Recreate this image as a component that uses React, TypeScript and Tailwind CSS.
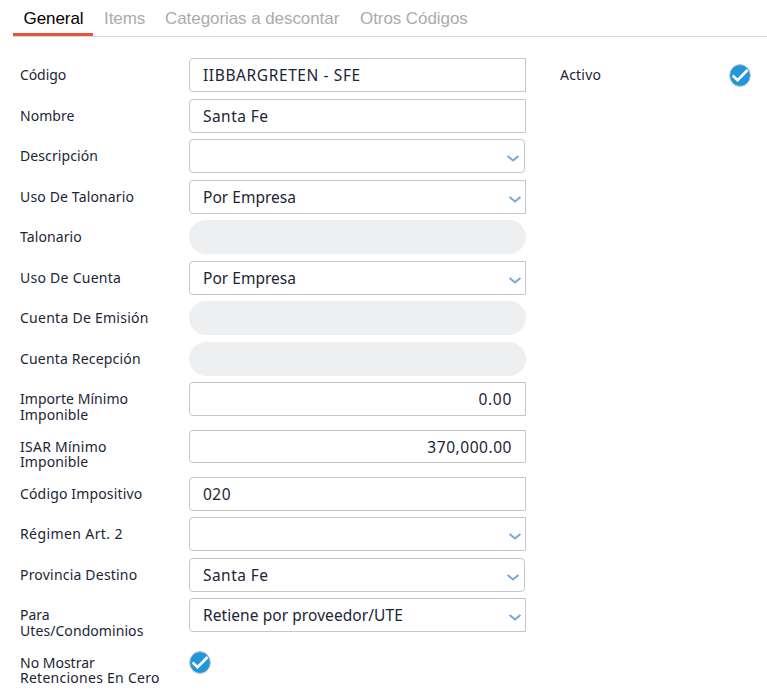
type Line = { text: string; tracking: string };

type Row = {
  label: Line[];
  value?: string;
  kind: 'text' | 'select' | 'selectRound' | 'disabled' | 'number' | 'check';
  height: string;
  valueTracking?: string;
  leading?: string;
  box?: string;
};

const rows: Row[] = [
  { label: [{ text: 'Código', tracking: 'tracking-[-0.1px]' }], value: 'IIBBARGRETEN - SFE', kind: 'text', height: 'h-[41px]', valueTracking: 'tracking-[0.6px]' },
  { label: [{ text: 'Nombre', tracking: 'tracking-[0.03px]' }], value: 'Santa Fe', kind: 'text', height: 'h-10', valueTracking: 'tracking-[0.45px]' },
  { label: [{ text: 'Descripción', tracking: 'tracking-[0.1px]' }], kind: 'selectRound', height: 'h-[41px]' },
  { label: [{ text: 'Uso De Talonario', tracking: 'tracking-[0.15px]' }], value: 'Por Empresa', kind: 'select', height: 'h-10', valueTracking: 'tracking-[0.02px]' },
  { label: [{ text: 'Talonario', tracking: 'tracking-[0.1px]' }], kind: 'disabled', height: 'h-[41px]' },
  { label: [{ text: 'Uso De Cuenta', tracking: 'tracking-[0.26px]' }], value: 'Por Empresa', kind: 'select', height: 'h-10', valueTracking: 'tracking-[0.02px]' },
  { label: [{ text: 'Cuenta De Emisión', tracking: 'tracking-[0.26px]' }], kind: 'disabled', height: 'h-[41px]' },
  { label: [{ text: 'Cuenta Recepción', tracking: 'tracking-[0.18px]' }], kind: 'disabled', height: 'h-10' },
  { label: [{ text: 'Importe Mínimo', tracking: 'tracking-[0.05px]' }, { text: 'Imponible', tracking: 'tracking-[0.1px]' }], value: '0.00', kind: 'number', height: 'h-12', valueTracking: 'tracking-[0.7px]' },
  { label: [{ text: 'ISAR Mínimo', tracking: 'tracking-[0.26px]' }, { text: 'Imponible', tracking: 'tracking-[0.1px]' }], value: '370,000.00', kind: 'number', height: 'h-[47px]', valueTracking: 'tracking-[0.54px]', leading: 'leading-[15px]', box: 'h-[33px]' },
  { label: [{ text: 'Código Impositivo', tracking: 'tracking-[0.15px]' }], value: '020', kind: 'text', height: 'h-10', valueTracking: 'tracking-[0.5px]' },
  { label: [{ text: 'Régimen Art. 2', tracking: 'tracking-[0.4px]' }], kind: 'select', height: 'h-[41px]' },
  { label: [{ text: 'Provincia Destino', tracking: 'tracking-[0.2px]' }], value: 'Santa Fe', kind: 'selectRound', height: 'h-10', valueTracking: 'tracking-[0.45px]' },
  { label: [{ text: 'Para', tracking: 'tracking-normal' }, { text: 'Utes/Condominios', tracking: 'tracking-[0.07px]' }], value: 'Retiene por proveedor/UTE', kind: 'select', height: 'h-12', valueTracking: 'tracking-[0.07px]' },
  { label: [{ text: 'No Mostrar', tracking: 'tracking-normal' }, { text: 'Retenciones En Cero', tracking: 'tracking-[0.26px]' }], kind: 'check', height: 'h-11', leading: 'leading-[15px]' },
];

function Check() {
  return (
    <svg className="block h-[23px] w-[22px]" viewBox="0 0 22 23" fill="none">
      <ellipse cx="11" cy="11.5" rx="10.4" ry="10.9" fill="#2196db" stroke="#c4c4c4" strokeWidth="1" />
      <path d="M3.6 11.6 8.6 16.2 18.6 6" stroke="#fff" strokeWidth="2.7" />
    </svg>
  );
}

function Chevron() {
  return (
    <svg className="mt-[5px] h-[7px] w-3" viewBox="0 0 12 7" fill="none">
      <path d="M.6.9 6 5.5 11.4.9" stroke="#72a6dc" strokeWidth="1.9" />
    </svg>
  );
}

function Field({ row }: { row: Row }) {
  if (row.kind === 'check') return <div className="pt-[5px]"><Check /></div>;
  if (row.kind === 'disabled') return <div className="h-[34px] w-[337px] rounded-full bg-[#eeeff1]" />;
  const select = row.kind === 'select' || row.kind === 'selectRound';
  const shape = row.kind === 'selectRound' ? 'w-[336px] rounded pr-[5px]' : select ? 'w-[337px] rounded-l pr-1' : 'w-[337px] rounded-l pr-[13px]';
  return (
    <div className={`flex items-center border border-[#c6c6c6] pl-[13px] ${row.box ?? 'h-[34px]'} ${shape} ${row.kind === 'number' ? 'justify-end' : 'justify-between'}`}>
      <span className={`text-[15.5px] leading-5 ${row.valueTracking ?? ''}`}>{row.value}</span>
      {select && <Chevron />}
    </div>
  );
}

export default function App() {
  return (
    <div className="h-[690px] w-[767px] overflow-hidden bg-white font-['Noto_Sans',sans-serif] text-[#1c2536]">
      <nav className="ml-[13px] flex h-[37px] border-b border-[#d9d9d9] font-['Liberation_Sans',Arial,sans-serif] text-[17px] leading-[37px] tracking-[-0.07px] text-[#ababab]">
        <div className="h-9 w-20 border-b-[3px] border-[#e8543b] pl-[10.5px] text-black">General</div>
        <div className="w-[61px] pl-[11px]">Items</div>
        <div className="w-[195px] pl-[11px] whitespace-nowrap">Categorias a descontar</div>
        <div className="pl-[11px] whitespace-nowrap">Otros Códigos</div>
      </nav>
      <main className="flex pt-[21px] pl-5">
        <div>
          {rows.map((row) => (
            <div key={row.label[0].text} className={`flex ${row.height}`}>
              <div className={`w-[169px] pt-[9px] text-[14px] whitespace-nowrap ${row.leading ?? 'leading-4'}`}>
                {row.label.map((line) => <div key={line.text} className={line.tracking}>{line.text}</div>)}
              </div>
              <Field row={row} />
            </div>
          ))}
        </div>
        <div className="ml-[34px] flex">
          <div className="w-[169px] pt-[9px] text-[14px] leading-4 tracking-[0.2px]">Activo</div>
          <div className="pt-[6px]"><Check /></div>
        </div>
      </main>
    </div>
  );
}
